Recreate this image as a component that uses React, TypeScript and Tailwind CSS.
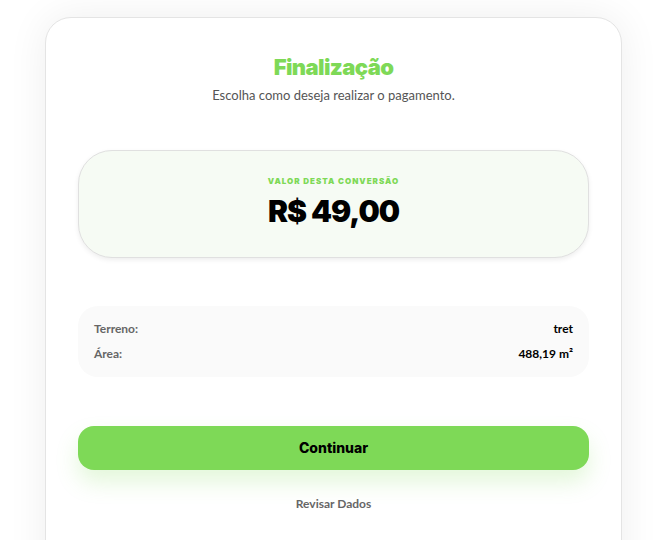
export default function App() {
  return (
    <div className="h-screen bg-white font-['Lato','Inter',sans-serif] flex items-start pl-[45px] pt-[17px] overflow-hidden">
      <div className="w-[577px] h-[600px] shrink-0 bg-white rounded-[26px] border border-[#e4e4e4] shadow-[0_0_40px_rgba(0,0,0,0.07)] px-8 pt-[34px]">
        <header className="text-center">
          <h1 className="font-['Inter',sans-serif] text-[22px] leading-[30px] font-black text-[#7ed957] tracking-[-0.6px]">Finalização</h1>
          <p className="mt-[4px] text-[13px] text-[#555]">Escolha como deseja realizar o pagamento.</p>
        </header>

        {/* Valor */}
        <div className="mt-[44px] h-[108px] rounded-[34px] border border-[#e0e0e0] bg-[#f6fbf4] shadow-[0_2px_5px_rgba(0,0,0,0.07)] flex flex-col items-center pt-[24px]">
          <span className="font-['Inter',sans-serif] text-[8px] font-black tracking-[1px] text-[#7ed957]">VALOR DESTA CONVERSÃO</span>
          <span className="font-['Inter',sans-serif] mt-[6px] text-[30px] leading-[36px] font-black text-black tracking-[-1px]">R$ 49,00</span>
        </div>

        {/* Dados */}
        <div className="mt-[48px] rounded-[20px] bg-[#fafafa] px-4 py-[14px] flex flex-col gap-[7px] text-[12px]">
          <div className="flex justify-between">
            <span className="font-bold text-[#666]">Terreno:</span>
            <span className="font-bold text-black">tret</span>
          </div>
          <div className="flex justify-between">
            <span className="font-bold text-[#666]">Área:</span>
            <span className="font-bold text-black">488,19 m²</span>
          </div>
        </div>

        <button className="mt-[49px] w-full h-[44px] rounded-[16px] bg-[#7ed957] font-['Inter',sans-serif] text-[14px] font-extrabold text-black shadow-[0_12px_22px_rgba(126,217,87,0.22)]">
          Continuar
        </button>
        <div className="mt-[20px] text-center">
          <button className="text-[12px] font-bold text-[#666]">Revisar Dados</button>
        </div>
      </div>
    </div>
  )
}
